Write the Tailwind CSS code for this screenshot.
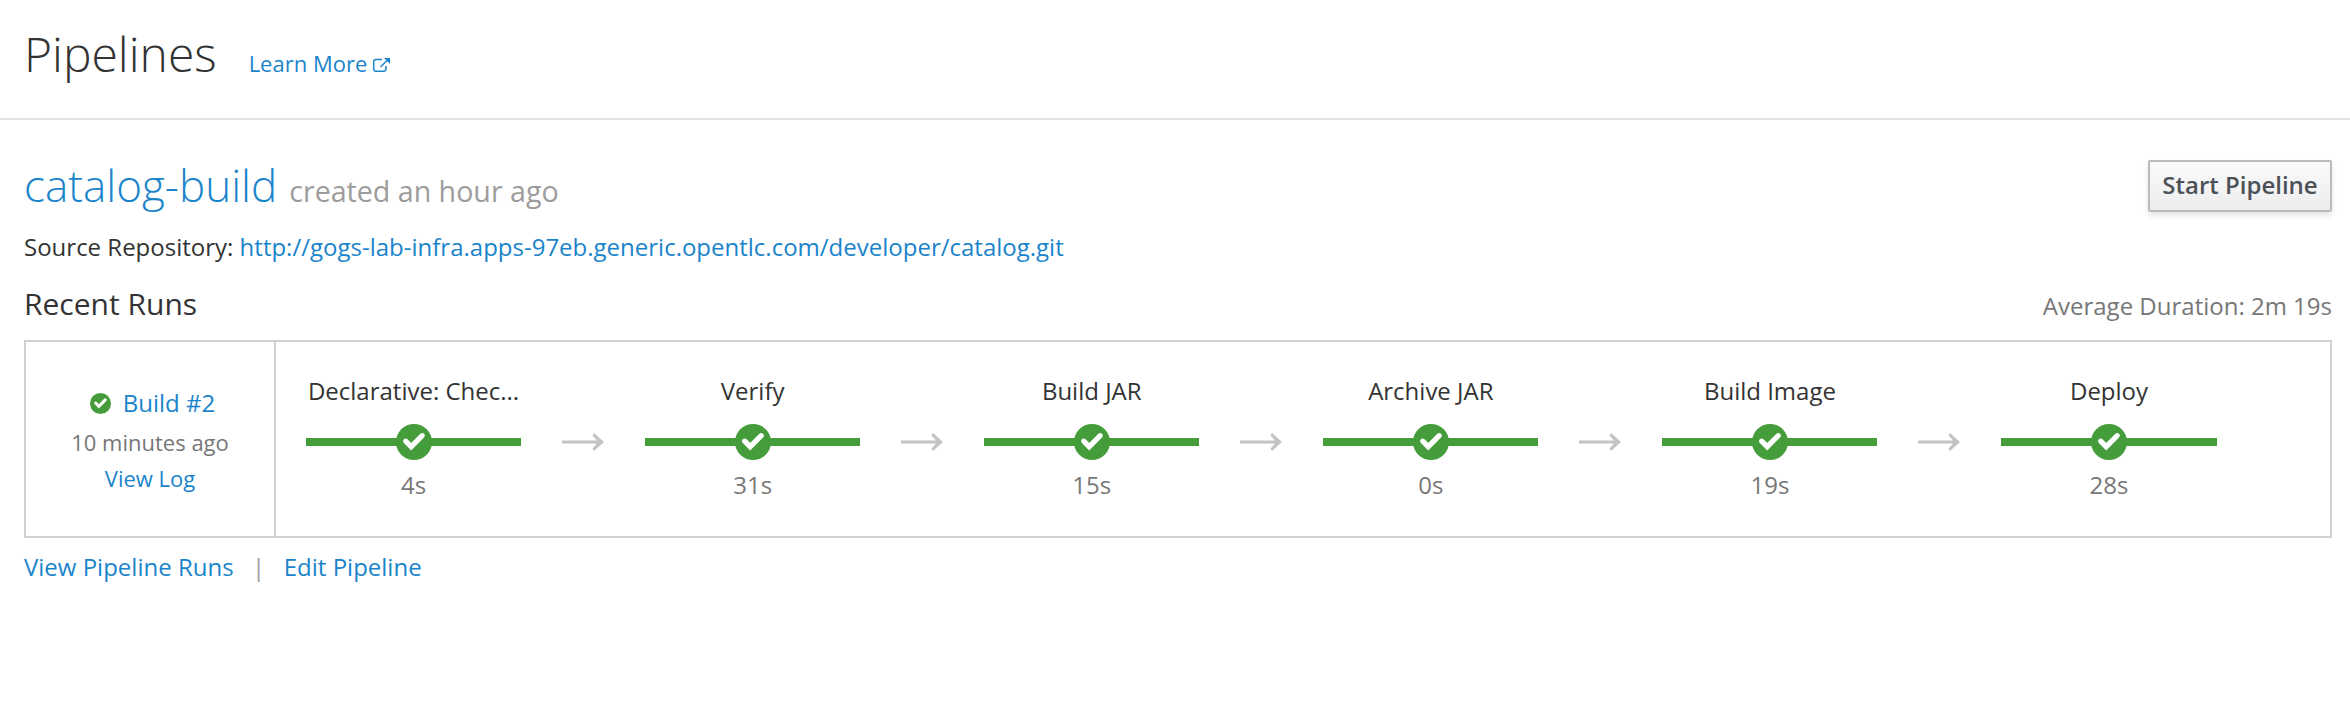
<!DOCTYPE html>
<html lang="en">
<head>
<meta charset="utf-8">
<title>Pipelines</title>
<script src="https://cdn.jsdelivr.net/npm/@tailwindcss/browser@4"></script>
</head>
<body class="bg-white font-['Open_Sans',sans-serif] text-[24px] text-[#333333]">
<svg class="hidden">
  <symbol id="ok" viewBox="0 0 36 36"><circle cx="18" cy="18" r="18" fill="#459c3b"/><path d="M9.700 17.200 15.200 22.700 26.200 11.700" fill="none" stroke="#fff" stroke-width="5.200" stroke-linecap="round" stroke-linejoin="miter"/></symbol>
  <symbol id="arrow" viewBox="0 0 42 18"><path d="M0 7.500H35L30.500 2.500 32 0 42 9 32 18 30.500 15.500 35 10.500H0Z" fill="#c3c3c3"/></symbol>
</svg>
<header class="flex h-[120px] items-baseline gap-8 border-b-2 border-[#e3e3e3] pt-[21px] pl-6">
  <h1 class="text-[48px] leading-[66px] font-light">Pipelines</h1>
  <a class="text-[22px] leading-[36px] text-[#1a84cb]">Learn More<svg class="ml-[6px] inline-block h-[14px] w-[17px] align-baseline" viewBox="0 0 17 14"><path d="M9 1.500H3Q.7 1.500.7 4V11Q.7 13.300 3 13.300H10.500Q13 13.300 13 11V8M7.500 9 14 2.500" fill="none" stroke="#1a84cb" stroke-width="1.500"/><path d="M11 0H17V6Z" fill="#1a84cb"/></svg></a>
</header>
<main class="pr-[18px] pl-6 pt-10">
  <div class="flex h-[49px] items-start justify-between">
    <h2 class="mt-px flex items-baseline gap-3 text-[44px] leading-[48px] font-light text-[#1a84cb]">catalog-build <small class="text-[28.6px] font-normal text-[#9c9c9c]">created an hour ago</small></h2>
    <button class="h-[52px] w-[184px] rounded-[2px] border-2 border-[#bbbbbb] bg-linear-to-b from-[#fafafa] to-[#ededed] text-[24px] leading-[44px] font-semibold text-[#4d5258] shadow-[0_4px_6px_rgba(3,3,3,0.1)]"><span class="block -mt-0.5">Start Pipeline</span></button>
  </div>
  <p class="mt-[18px] leading-10">Source Repository: <a class="text-[#1a84cb]">http://gogs-lab-infra.apps-97eb.generic.opentlc.com/developer/catalog.git</a></p>
  <div class="mt-[17px] flex h-10 items-baseline justify-between leading-10"><h3 class="text-[30px]">Recent Runs</h3><span class="text-[#777777]">Average Duration: 2m 19s</span></div>
  <section class="mt-4 flex h-[198px] border-2 border-[#d1d1d1]">
    <div class="w-[250px] border-r-2 border-[#d1d1d1] pt-[43px] text-center leading-9 text-[#1a84cb]">
      <div class="flex items-center justify-center gap-3 pl-[5px]"><svg class="size-[21px]"><use href="#ok" width="21" height="21"/></svg><a>Build #2</a></div>
      <div class="mt-[3px] text-[22px] text-[#777777]">10 minutes ago</div>
      <a class="block text-[22px]">View Log</a>
    </div>
    <div class="flex gap-[41px] pt-[31px] pl-[30px] text-center leading-9" id="stages"></div>
  </section>
  <nav class="mt-[11px] flex gap-[18.5px] leading-9 text-[#1a84cb]"><a>View Pipeline Runs</a><span class="text-[#9c9c9c]">|</span><a>Edit Pipeline</a></nav>
</main>
<script>
const stages = [['Declarative: Chec...','4s'],['Verify','31s'],['Build JAR','15s'],['Archive JAR','0s'],['Build Image','19s'],['Deploy','28s']];
document.getElementById('stages').innerHTML = stages.map(([name, time]) => `
  <div class="w-[215.1px] whitespace-nowrap"><div>${name}</div>
  <div class="mt-[15px] flex h-9 items-center"><i class="h-2 w-[91.5px] bg-[#459c3b]"></i><svg class="-mx-0.5 h-9 w-9 shrink-0"><use href="#ok"/></svg><i class="h-2 flex-1 bg-[#459c3b]"></i></div>
  <div class="mt-[7px] text-[#777777]">${time}</div></div>`).join('<svg class="mt-[60px] h-[18px] w-[42px]"><use href="#arrow"/></svg>');
</script>
</body>
</html>
